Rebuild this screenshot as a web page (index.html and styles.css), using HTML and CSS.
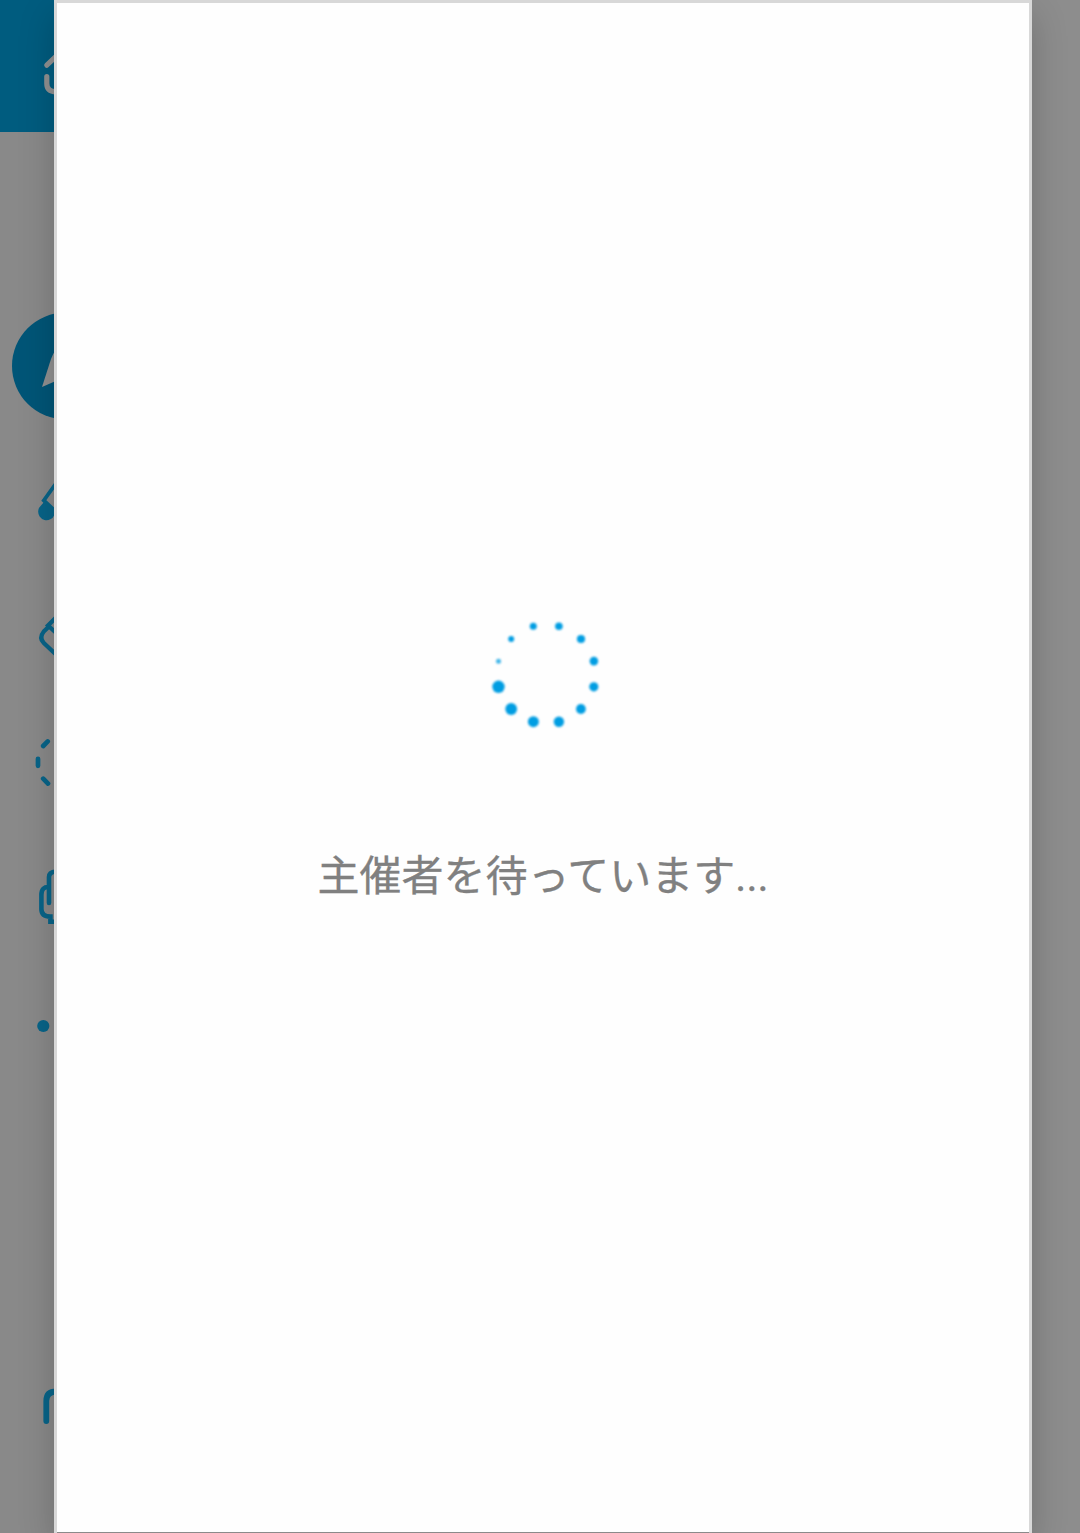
FILE: index.html
```
<!DOCTYPE html>
<html lang="ja">
<head>
<meta charset="utf-8">
<title>主催者を待っています</title>
<link rel="stylesheet" href="styles.css">
</head>
<body>
<main class="app">
  <header class="topbar">
    <svg class="home" viewBox="0 0 80 132" fill="none" stroke="#919191" stroke-width="5.2" stroke-linecap="round"><path d="M46.8 65.2 66 47M46.8 76.5v7q0 8.2 9 8.2h12"/></svg>
  </header>
  <nav class="tools">
    <svg class="tool-icons" viewBox="0 132 80 1401" fill="none" stroke="#086488">
      <circle cx="65.4" cy="366" r="53.4" fill="#005577" stroke="none"/>
      <path d="M65 335Q54 351 51 359L42 387 65 377Z" fill="#919191" stroke="none"/>
      <path d="M57 482 43.8 500.5 55 511" stroke-width="3.8"/>
      <path d="M44 500 54.5 509A8.4 8.4 0 1 1 41 505.5L44 502Z" fill="#086488" stroke="none"/>
      <path d="M46.5 627 61 612.5M49.5 626 43.8 631.5Q38.6 638 43.8 643L56 654.5M48 625.5 65 641" stroke-width="4.3"/>
      <path d="M43.2 746 47.7 741.4M38 758.8v7M43.2 778.7 48 783.6" stroke-width="4.7" stroke-linecap="round"/>
      <path d="M49 903v-26q0-5 7-5.5M49 887q-7.6-.5-7.6 8v14q0 7.6 9 7.6v5.2h7" stroke-width="4.6" stroke-linecap="round"/>
      <circle cx="43.3" cy="1026" r="6.1" fill="#086488" stroke="none"/>
      <path d="M46.3 1421v-20q0-9.5 10-9.5h9" stroke-width="5.8" stroke-linecap="round"/>
    </svg>
  </nav>
  <section class="dialog" role="dialog" aria-label="待機中">
    <svg class="spinner" viewBox="480 610 130 130" fill="#009de2">
      <circle cx="498.5" cy="661.2" r="2.5" opacity=".75"/>
      <circle cx="511.2" cy="639" r="3"/>
      <circle cx="533.3" cy="626.3" r="3.5"/>
      <circle cx="558.9" cy="626.3" r="3.8"/>
      <circle cx="581" cy="639" r="4.1"/>
      <circle cx="593.9" cy="661.1" r="4.3"/>
      <circle cx="593.8" cy="686.8" r="4.6"/>
      <circle cx="580.9" cy="709" r="4.9"/>
      <circle cx="558.9" cy="721.7" r="5.2"/>
      <circle cx="533.4" cy="721.7" r="5.5"/>
      <circle cx="511.2" cy="709" r="5.9"/>
      <circle cx="498.5" cy="686.8" r="6.2"/>
    </svg>
    <p class="message">主催者を待っています...</p>
  </section>
</main>
</body>
</html>
```
FILE: styles.css
```
* { box-sizing: border-box; }
body { margin: 0; background: #8a8a8a; }
.app {
  position: relative;
  height: 1533px;
  overflow: hidden;
  background: linear-gradient(90deg, #898989 0 50%, #8d8d8d 50%);
}
.topbar { width: 80px; height: 132px; background: #005c7f; }
.home, .tool-icons { display: block; width: 80px; height: 100%; }
.tools { height: 1401px; }
.dialog {
  position: absolute;
  top: 0;
  left: 54px;
  width: 978px;
  height: 1533px;
  display: flex;
  flex-direction: column;
  align-items: center;
  padding-top: 607px;
  background: linear-gradient(#8a8a8a, #8a8a8a) bottom / 100% 1px no-repeat, #fefefe;
  background-clip: padding-box;
  border: 3px solid #d8d8d8;
  border-bottom: 0;
  box-shadow: 0 14px 34px rgba(0, 0, 0, .2);
}
.spinner {
  width: 130px;
  height: 130px;
  flex: none;
  margin-left: 4px;
  filter: blur(.8px);
}
.message {
  margin: 106px 0 0;
  font: 400 42px/62px Roboto, "Noto Sans CJK JP", sans-serif;
  color: #808080;
  -webkit-text-stroke: .3px #808080;
  white-space: nowrap;
}
```
